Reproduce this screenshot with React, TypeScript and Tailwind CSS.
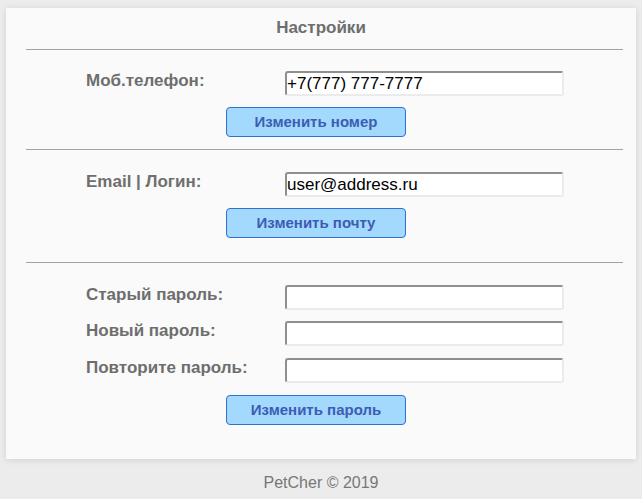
import React from "react";

const Field = ({
  label,
  value,
  className = "",
}: {
  label: string;
  value?: string;
  className?: string;
}) => (
  <div className={`flex items-start pl-[80px] ${className}`}>
    <label className="w-[199px] text-[17px] leading-[19px] font-bold text-[#6e6e6e]">
      {label}
    </label>
    <input
      defaultValue={value}
      className="w-[279px] h-[25px] bg-white rounded-[3px] border-2 border-t-[#8f8f8f] border-l-[#8f8f8f] border-b-[#ebebeb] border-r-[#ebebeb] px-0 text-[17px] leading-[20px] text-black outline-none"
    />
  </div>
);

const ActionButton = ({ text, className = "" }: { text: string; className?: string }) => (
  <div className={`flex pl-[220px] ${className}`}>
    <button className="w-[180px] h-[30px] rounded-[4px] border border-[#2f6fd8] bg-[#a3d9fd] text-[15px] font-bold text-[#3d5cb3]">
      {text}
    </button>
  </div>
);

const Divider = ({ className = "" }: { className?: string }) => (
  <div className={`ml-[20px] mr-[13px] h-px bg-[#a3a3a3] ${className}`} />
);

export default function App() {
  return (
    <div
      className="min-h-[499px] bg-[#ececec] pt-[8px]"
      style={{ fontFamily: '"Liberation Sans", Arial, sans-serif' }}
    >
      <div className="mx-[6px] bg-[#fafafa] shadow-[0_1px_6px_rgba(0,0,0,0.12)] pb-[34px]">
        <div className="h-[41px] pt-[10px] text-center text-[17px] leading-[19px] font-bold text-[#6e6e6e]">
          Настройки
        </div>
        <Divider />

        <Field label="Моб.телефон:" value="+7(777) 777-7777" className="mt-[21px]" />
        <ActionButton text="Изменить номер" className="mt-[11px]" />
        <Divider className="mt-[12px]" />

        <Field label="Email | Логин:" value="user@address.ru" className="mt-[22px]" />
        <ActionButton text="Изменить почту" className="mt-[11px]" />
        <Divider className="mt-[24px]" />

        <Field label="Старый пароль:" className="mt-[22px]" />
        <Field label="Новый пароль:" className="mt-[11px]" />
        <Field label="Повторите пароль:" className="mt-[12px]" />
        <ActionButton text="Изменить пароль" className="mt-[12px]" />
      </div>
      <div className="pt-[15px] text-center text-[16px] leading-[18px] text-[#777777]">
        PetCher © 2019
      </div>
    </div>
  );
}
